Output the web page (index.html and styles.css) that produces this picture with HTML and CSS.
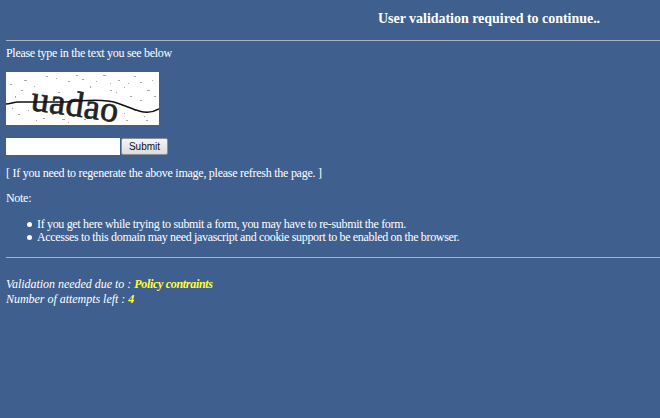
FILE: index.html
```html
<!DOCTYPE html>
<html lang="en">
<head>
<meta charset="utf-8">
<title>User validation required</title>
<link rel="stylesheet" href="styles.css">
</head>
<body>
<h1 class="title">User validation required to continue..</h1>
<hr class="rule">
<p class="intro">Please type in the text you see below</p>
<svg class="captcha" width="153" height="53" viewBox="0 0 153 53">
  <rect width="153" height="53" fill="#fff"/>
  <g fill="#a8a8a8">
    <rect x="4" y="12" width="2" height="1"/><rect x="18" y="8" width="3" height="1"/><rect x="28" y="14" width="1" height="1"/><rect x="40" y="4" width="2" height="1"/><rect x="62" y="9" width="2" height="1"/><rect x="70" y="3" width="2" height="1"/><rect x="84" y="14" width="1" height="2"/><rect x="97" y="3" width="3" height="1"/><rect x="112" y="8" width="2" height="1"/><rect x="118" y="15" width="1" height="1"/><rect x="128" y="4" width="2" height="1"/><rect x="134" y="10" width="2" height="1"/><rect x="141" y="18" width="3" height="1"/><rect x="124" y="24" width="2" height="1"/><rect x="146" y="8" width="1" height="1"/><rect x="134" y="28" width="2" height="1"/><rect x="12" y="42" width="2" height="1"/><rect x="22" y="38" width="1" height="1"/><rect x="37" y="46" width="2" height="1"/><rect x="56" y="47" width="3" height="1"/><rect x="68" y="43" width="2" height="1"/><rect x="78" y="47" width="2" height="1"/><rect x="118" y="41" width="1" height="1"/><rect x="128" y="38" width="2" height="1"/><rect x="140" y="48" width="2" height="1"/><rect x="110" y="20" width="1" height="1"/><rect x="9" y="24" width="1" height="2"/><rect x="52" y="20" width="2" height="1"/><rect x="104" y="18" width="2" height="1"/><rect x="90" y="9" width="1" height="1"/><rect x="6" y="36" width="1" height="1"/><rect x="15" y="18" width="2" height="1"/><rect x="50" y="6" width="1" height="1"/><rect x="76" y="7" width="2" height="1"/><rect x="104" y="11" width="1" height="1"/><rect x="122" y="11" width="1" height="1"/><rect x="148" y="24" width="2" height="1"/><rect x="138" y="44" width="1" height="1"/><rect x="30" y="48" width="1" height="1"/><rect x="46" y="42" width="2" height="1"/><rect x="62" y="50" width="1" height="1"/><rect x="120" y="48" width="2" height="1"/>
  </g>
  <text class="captcha-word" x="24" y="38" transform="rotate(8 24 38)">uadao</text>
  <path d="M0 32 C4 32 8 30 12 30 L60 30 C80 28 100 27 111 31 C120 34 126 37 133 39 C140 41 148 40 153 37" fill="none" stroke="#111" stroke-width="1.5"/>
</svg>
<form class="answer">
  <input class="answer-field" type="text" aria-label="Text in the image">
  <button class="answer-submit" type="button">Submit</button>
</form>
<p class="hint">[ If you need to regenerate the above image, please refresh the page. ]</p>
<p class="note">Note:</p>
<ul class="notes">
  <li>If you get here while trying to submit a form, you may have to re-submit the form.</li>
  <li>Accesses to this domain may need javascript and cookie support to be enabled on the browser.</li>
</ul>
<hr class="rule">
<p class="status">Validation needed due to : <b class="value">Policy contraints</b><br>Number of attempts left : <b class="value">4</b></p>
</body>
</html>
```
FILE: styles.css
```css
html, body { margin: 0; padding: 0; }
body {
  background: #3f5f8f;
  color: #fff;
  font-family: "Liberation Serif", "Times New Roman", serif;
  font-size: 12px;
  letter-spacing: -0.3px;
  line-height: 14px;
  padding: 0 0 0 6px;
  overflow: hidden;
}
.title {
  margin: 0;
  padding: 11px 0 0 372px;
  font-size: 14px;
  letter-spacing: -0.03px;
  line-height: 15px;
  font-weight: bold;
  height: 29px;
  box-sizing: content-box;
  white-space: nowrap;
}
.rule {
  margin: 0;
  height: 0;
  border: 0;
  border-top: 1px solid #a9b3c1;
}
.intro { margin: 5px 0 0; }
.captcha { display: block; margin-top: 12px; }
.captcha-word {
  font-family: "Liberation Serif", serif;
  font-size: 36px;
  letter-spacing: 0.4px;
  fill: #222;
  stroke: #222;
  stroke-width: .7px;
}
.answer { display: flex; align-items: center; margin: 13px 0 0; gap: 1px; }
.answer-field {
  width: 114px;
  height: 17px;
  box-sizing: border-box;
  border: 0;
  background: #fff;
  padding: 0;
  margin: 0;
}
.answer-submit {
  width: 47px;
  height: 17px;
  padding: 0;
  margin: 0;
  box-sizing: border-box;
  border: 1px solid #8a8f96;
  border-radius: 2px;
  background: linear-gradient(#f4f4f4, #dcdcdc);
  color: #111;
  font-family: "Liberation Sans", Arial, sans-serif;
  font-size: 10px;
  letter-spacing: 0;
  line-height: 15px;
}
.hint { margin: 11px 0 0; letter-spacing: -0.26px; }
.note { margin: 11px 0 0; }
.notes { margin: 13px 0 0; padding: 0 0 0 31px; list-style: none; letter-spacing: -0.33px; }
.notes li { line-height: 13px; position: relative; }
.notes li::before {
  content: "";
  position: absolute;
  left: -10px;
  top: 4px;
  width: 5px;
  height: 5px;
  border-radius: 50%;
  background: #fff;
}
.notes + .rule { margin-top: 13px; }
.status { margin: 19px 0 0; font-style: italic; line-height: 15px; letter-spacing: -0.03px; }
.value { color: #ffff33; letter-spacing: -0.3px; }
```
